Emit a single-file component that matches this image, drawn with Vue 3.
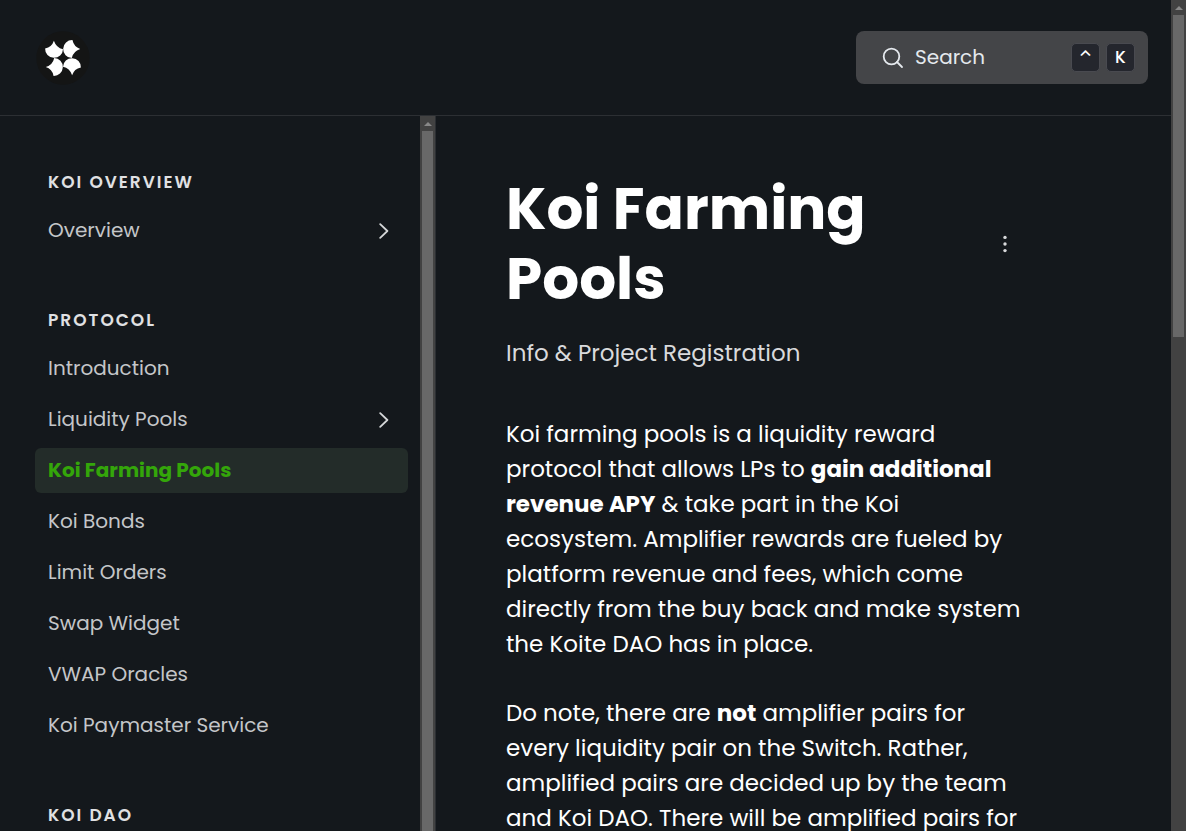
<script setup>
const groups = [
  { title: 'Koi Overview', items: [{ label: 'Overview', nested: true }] },
  {
    title: 'Protocol',
    items: [
      { label: 'Introduction' },
      { label: 'Liquidity Pools', nested: true },
      { label: 'Koi Farming Pools', active: true },
      { label: 'Koi Bonds' },
      { label: 'Limit Orders' },
      { label: 'Swap Widget' },
      { label: 'VWAP Oracles' },
      { label: 'Koi Paymaster Service' },
    ],
  },
  { title: 'Koi DAO', items: [] },
]
const petalAngles = [0, 90, 180, 270]
</script>

<template>
  <div class="page">
    <div class="site">
      <header class="header">
        <a href="#" class="logo" aria-label="Koi home">
          <svg viewBox="21 32 160 160" aria-hidden="true">
            <circle cx="101" cy="112" r="79" fill="#141515" />
            <g fill="#fff">
              <path
                v-for="angle in petalAngles"
                :key="angle"
                d="M48 84Q68 80 74 61Q81 82 101 86A26.5 26.5 0 0 1 48 84Z"
                :transform="`rotate(${angle} 101 112)`"
              />
            </g>
          </svg>
        </a>
        <button type="button" class="search">
          <svg class="search-icon" viewBox="0 0 22 22" aria-hidden="true">
            <circle cx="9.5" cy="9.5" r="7.8" />
            <path d="M15 15L20 20" />
          </svg>
          <span class="search-label">Search</span>
          <kbd>⌃</kbd>
          <kbd>K</kbd>
        </button>
      </header>

      <div class="body">
        <nav class="sidebar" aria-label="Documentation">
          <section v-for="group in groups" :key="group.title" class="group">
            <h2>{{ group.title }}</h2>
            <ul>
              <li v-for="item in group.items" :key="item.label">
                <a href="#" :class="{ active: item.active }">
                  {{ item.label }}
                  <svg v-if="item.nested" class="chevron" viewBox="0 0 10 16" aria-hidden="true">
                    <path d="M1.2 1.2L8.4 8L1.2 14.8" />
                  </svg>
                </a>
              </li>
            </ul>
          </section>
        </nav>
        <div class="track track-nav" aria-hidden="true">
          <span class="arrow"></span>
          <span class="thumb"></span>
        </div>
        <main class="content">
          <div class="title-row">
            <h1>Koi Farming Pools</h1>
            <button type="button" class="more" aria-label="More options">
              <svg viewBox="0 0 4 18" aria-hidden="true">
                <circle cx="2" cy="2.4" r="1.7" />
                <circle cx="2" cy="9" r="1.7" />
                <circle cx="2" cy="15.6" r="1.7" />
              </svg>
            </button>
          </div>
          <p class="subtitle">Info &amp; Project Registration</p>
          <p class="text">
            Koi farming pools is a liquidity reward protocol that allows LPs to
            <strong>gain additional revenue APY</strong> &amp; take part in the Koi
            ecosystem. Amplifier rewards are fueled by platform revenue and fees, which come
            directly from the buy back and make system the Koite DAO has in place.
          </p>
          <p class="text">
            Do note, there are <strong>not</strong> amplifier pairs for every liquidity pair on
            the Switch. Rather, amplified pairs are decided up by the team and Koi DAO. There
            will be amplified pairs for
          </p>
        </main>
      </div>
    </div>
    <div class="track" aria-hidden="true">
      <span class="arrow"></span>
      <span class="thumb thumb-page"></span>
    </div>
  </div>
</template>

<style>
body {
  background: #14181c;
}
</style>

<style scoped>
* {
  box-sizing: border-box;
  margin: 0;
  padding: 0;
}
.page {
  display: flex;
  height: 100vh;
  overflow: hidden;
  background: #14181c;
  color: #fff;
  font-family: Poppins, Inter, "Open Sans", sans-serif;
}
.site {
  flex: 1;
  min-width: 0;
  display: flex;
  flex-direction: column;
}
.header {
  display: flex;
  flex: none;
  align-items: center;
  justify-content: space-between;
  height: 116px;
  padding: 0 23px 0 36px;
  border-bottom: 1px solid #2c2f33;
}
.logo,
.logo svg {
  display: block;
  width: 54px;
  height: 54px;
}
.search {
  display: flex;
  align-items: center;
  width: 292px;
  height: 53px;
  padding: 0 13px 0 26px;
  border: 0;
  border-radius: 8px;
  background: #444548;
  color: #e5e9ee;
  font: inherit;
  font-size: 20px;
}
.search-icon {
  width: 22px;
  height: 22px;
  margin-right: 11px;
  fill: none;
  stroke: #e5e9ee;
  stroke-width: 1.8;
  stroke-linecap: round;
}
.search-label {
  flex: 1;
  padding-bottom: 1px;
  text-align: left;
}
kbd {
  display: flex;
  align-items: center;
  justify-content: center;
  width: 29px;
  height: 29px;
  margin-left: 6px;
  padding-bottom: 2px;
  border: 1px solid #494a50;
  border-radius: 5px;
  background: #24262d;
  color: #fff;
  font-family: Poppins, Inter, sans-serif;
  font-size: 17px;
  font-weight: 500;
}
.body {
  display: flex;
  flex: 1;
  min-height: 0;
}
.sidebar {
  flex: none;
  width: 420px;
  padding: 52px 12px 0 35px;
  overflow: hidden;
}
.group {
  margin-bottom: 53px;
}
h2 {
  height: 28px;
  margin-bottom: 12px;
  padding-left: 13px;
  color: #e0e1e3;
  font-size: 17px;
  font-weight: 600;
  line-height: 28px;
  letter-spacing: 2px;
  text-transform: uppercase;
}
ul {
  list-style: none;
}
li + li {
  margin-top: 6px;
}
li a {
  display: flex;
  align-items: center;
  justify-content: space-between;
  height: 45px;
  padding: 0 19px 2px 13px;
  border-radius: 6px;
  color: #c4c6c9;
  font-size: 20px;
  text-decoration: none;
}
li a.active {
  background: #232c29;
  color: #34a60a;
  font-weight: 700;
}
.chevron {
  width: 10px;
  height: 16px;
  margin-top: 2px;
  fill: none;
  stroke: #d5d7d9;
  stroke-width: 1.8;
  stroke-linecap: round;
  stroke-linejoin: round;
}
.track {
  display: flex;
  flex: none;
  flex-direction: column;
  align-items: center;
  width: 15px;
  padding-top: 6px;
  background: #424242;
  overflow: hidden;
}
.track-nav {
  width: 16px;
  border-right: 1px solid #2c2f33;
}
.arrow {
  flex: none;
  margin-bottom: 5px;
  border: 4px solid transparent;
  border-top-width: 0;
  border-bottom-color: #888;
}
.thumb {
  flex: 1;
  width: 11px;
  background: #686868;
}
.thumb-page {
  flex: 0 0 39%;
}
.content {
  flex: 1;
  min-width: 0;
  padding: 58px 141px 0 70px;
  overflow: hidden;
}
.title-row {
  display: flex;
  align-items: center;
}
h1 {
  flex: 1;
  font-size: 58px;
  font-weight: 700;
  line-height: 70px;
}
.more {
  display: flex;
  justify-content: center;
  width: 50px;
  padding: 8px 0;
  border: 0;
  background: none;
}
.more svg {
  width: 4px;
  height: 18px;
  fill: #d9dadc;
}
.subtitle {
  margin: 22px 0 46px;
  color: #d9dadc;
  font-size: 23px;
  line-height: 35px;
}
.text {
  margin-bottom: 34px;
  font-size: 23px;
  line-height: 35px;
}
</style>
